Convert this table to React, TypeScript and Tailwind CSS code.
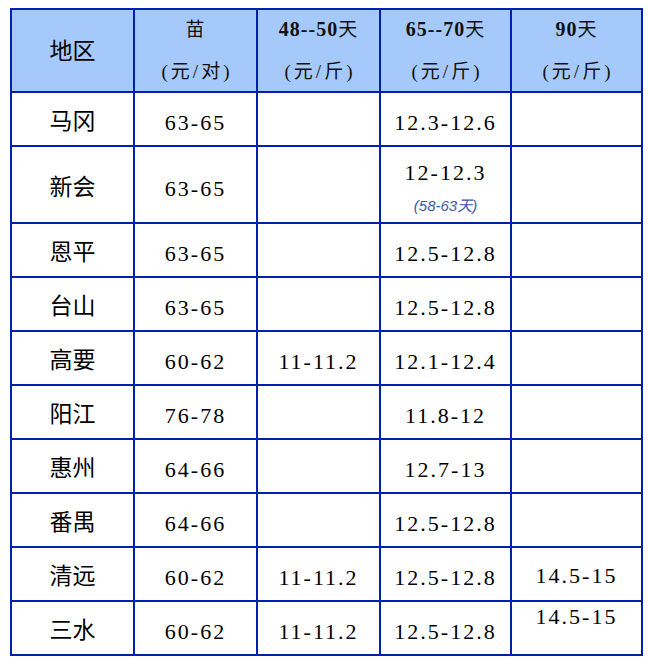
const rows = [
  { area: '马冈', seed: '63-65', d48: '', d65: '12.3-12.6', d90: '' },
  { area: '新会', seed: '63-65', d48: '', d65: '12-12.3', note: '(58-63天)', d90: '' },
  { area: '恩平', seed: '63-65', d48: '', d65: '12.5-12.8', d90: '' },
  { area: '台山', seed: '63-65', d48: '', d65: '12.5-12.8', d90: '' },
  { area: '高要', seed: '60-62', d48: '11-11.2', d65: '12.1-12.4', d90: '' },
  { area: '阳江', seed: '76-78', d48: '', d65: '11.8-12', d90: '' },
  { area: '惠州', seed: '64-66', d48: '', d65: '12.7-13', d90: '' },
  { area: '番禺', seed: '64-66', d48: '', d65: '12.5-12.8', d90: '' },
  { area: '清远', seed: '60-62', d48: '11-11.2', d65: '12.5-12.8', d90: '14.5-15' },
  { area: '三水', seed: '60-62', d48: '11-11.2', d65: '12.5-12.8', d90: '14.5-15', top: true },
]

const font = "font-['Liberation_Serif','Noto_Sans_CJK_SC',serif]"

function HeadCell({ top, bold }: { top: string; bold?: string }) {
  return (
    <div className="bg-[#a6c9fc] flex flex-col items-center justify-center text-[19px] leading-[42px] text-[#111]">
      <div className="tracking-[1px]">
        {bold && <span className="font-bold text-[20px]">{bold}</span>}
        {top}
      </div>
      <div className="tracking-[3px] pl-[3px]">(元/{top === '苗' ? '对' : '斤'})</div>
    </div>
  )
}

export default function App() {
  return (
    <div className={`bg-white min-h-screen pt-[8px] pl-[10px] ${font}`}>
      <div className="grid w-fit grid-cols-[121px_121px_121px_129px_129px] grid-rows-[81px_52px_75px_repeat(8,52px)] gap-[2px] p-[2px] bg-[#0021ad] text-black">
        <div className="bg-[#a6c9fc] flex items-center justify-center text-[23px] pt-[3px]">地区</div>
        <HeadCell top="苗" />
        <HeadCell bold="48--50" top="天" />
        <HeadCell bold="65--70" top="天" />
        <HeadCell bold="90" top="天" />

        {rows.map((r) => (
          <div key={r.area} className="contents">
            <div className="bg-white flex items-center justify-center text-[23px] pt-[7px]">{r.area}</div>
            <div className="bg-white flex items-center justify-center text-[22px] tracking-[2px] pt-[7px]">{r.seed}</div>
            <div className="bg-white flex items-center justify-center text-[22px] tracking-[2px] pt-[7px]">{r.d48}</div>
            {r.note ? (
              <div className="bg-white flex flex-col items-center pt-[12px] tracking-[2px]">
                <span className="text-[22px] leading-[28px]">{r.d65}</span>
                <span className="mt-[9px] text-[15px] italic leading-[20px] tracking-normal text-[#3a5aa8] font-['Liberation_Sans','Noto_Sans_CJK_SC',sans-serif]">
                  {r.note}
                </span>
              </div>
            ) : (
              <div className="bg-white flex items-center justify-center text-[22px] tracking-[2px] pt-[7px]">{r.d65}</div>
            )}
            <div
              className={
                r.top
                  ? 'bg-white flex justify-center text-[22px] tracking-[2px] leading-[28px] pt-[1px]'
                  : 'bg-white flex items-center justify-center text-[22px] tracking-[2px] pt-[3px]'
              }
            >
              {r.d90}
            </div>
          </div>
        ))}
      </div>
    </div>
  )
}
